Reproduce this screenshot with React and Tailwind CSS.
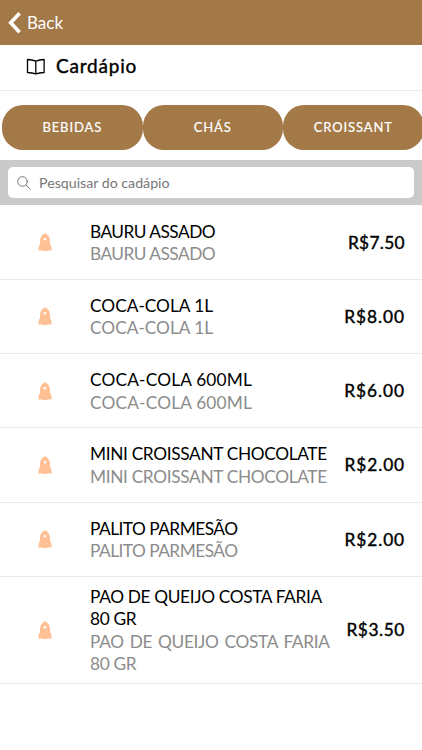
import { useState } from 'react';

const CATEGORIES = ['BEBIDAS', 'CHÁS', 'CROISSANT'];

const PRODUCTS = [
  { name: 'BAURU ASSADO', price: 'R$7.50', tracking: 'tracking-[-0.52px]', priceTracking: 'tracking-[0.35px]' },
  { name: 'COCA-COLA 1L', price: 'R$8.00', tracking: 'tracking-[0px]', priceTracking: 'tracking-[0.95px]' },
  { name: 'COCA-COLA 600ML', price: 'R$6.00', tracking: 'tracking-[0.18px]', priceTracking: 'tracking-[0.95px]' },
  { name: 'MINI CROISSANT CHOCOLATE', price: 'R$2.00', tracking: 'tracking-[-0.34px]', priceTracking: 'tracking-[0.9px]' },
  { name: 'PALITO PARMESÃO', price: 'R$2.00', tracking: 'tracking-[-0.52px]', priceTracking: 'tracking-[0.9px]' },
  { name: 'PAO DE QUEIJO COSTA FARIA 80 GR', price: 'R$3.50', tracking: 'tracking-[-0.35px]', priceTracking: 'tracking-[0.6px]' },
];

function BackIcon() {
  return (
    <svg width="13" height="22" viewBox="0 0 13 22" fill="none" stroke="currentColor" strokeWidth="3.6">
      <path d="M11.6 1.200 2.700 10.700l8.900 9.500" />
    </svg>
  );
}

function BookIcon() {
  return (
    <svg width="20" height="18" viewBox="0 0 20 18" fill="none" stroke="currentColor" strokeWidth="1.3" strokeLinejoin="round">
      <path d="M9.800 3.200C7.400 2.300 4.600 1.700 1.500 1.500v13c3.100.1 5.900.6 8.300 1.400 2.400-.8 5.200-1.300 8.300-1.400v-13C15 1.700 12.200 2.300 9.800 3.200ZM9.800 3.200v12.700" />
    </svg>
  );
}

function SearchIcon() {
  return (
    <svg width="14" height="14" viewBox="0 0 14 14" fill="none" stroke="currentColor" strokeWidth="1" strokeLinecap="round">
      <circle cx="5.500" cy="5.500" r="4.800" />
      <path d="m9 9 4.400 4.300" />
    </svg>
  );
}

function RocketIcon() {
  return (
    <svg width="14" height="19" viewBox="0 0 14 19" fill="#ffc096">
      <path
        fillRule="evenodd"
        d="M7 .3C4 1.700 2 4.300 2 7.500v3.400C1 12.100.5 13.500.5 15v2.700l2.800-.4c.4.500.9.700 1.500.7.400 0 .6-.2 1-.2.500 0 .7.500 1.200.5s.7-.5 1.200-.5c.4 0 .6.200 1 .2.600 0 1.100-.2 1.500-.7l2.800.4V15c0-1.500-.5-2.900-1.500-4.100V7.500C12 4.300 10 1.700 7 .3ZM7 4.900a1.300 1.300 0 1 1 0 2.600 1.300 1.300 0 0 1 0-2.600Z"
      />
    </svg>
  );
}

function ProductRow({ product }) {
  return (
    <li className="flex min-h-[74.300px] items-center border-b border-[#ebebeb] pr-[17px]">
      <div className="flex w-[90px] shrink-0 justify-center pt-px">
        <RocketIcon />
      </div>
      <div className={`w-[239.500px] shrink-0 pt-[9px] pb-[7px] text-[17.300px] leading-[22.500px] ${product.tracking}`}>
        <p className="text-black">{product.name}</p>
        <p className="text-justify text-[#8c8c8c]">{product.name}</p>
      </div>
      <span className={`ml-auto pt-px text-[17.300px] text-black [-webkit-text-stroke:0.4px_black] ${product.priceTracking}`}>
        {product.price}
      </span>
    </li>
  );
}

export default function App() {
  const [query, setQuery] = useState('');
  const products = PRODUCTS.filter((product) => product.name.toLowerCase().includes(query.toLowerCase()));

  return (
    <div className="h-[750px] w-full overflow-hidden bg-white font-[Lato,sans-serif]">
      <header className="flex h-[45px] items-center bg-[#a37948] pl-2 text-white">
        <button type="button" className="flex items-center gap-[6px]">
          <BackIcon />
          <span className="text-[17px]">Back</span>
        </button>
      </header>

      <div className="flex h-[46px] items-center gap-[10px] border-b border-[#ececec] pb-[2px] pl-[26px] text-black">
        <BookIcon />
        <h1 className="text-[19px] tracking-[0.8px] [-webkit-text-stroke:0.4px_black]">Cardápio</h1>
      </div>

      <nav className="flex h-[69.400px] items-center overflow-hidden pt-[4px] pl-[2px]">
        {CATEGORIES.map((category) => (
          <button
            key={category}
            type="button"
            className="h-[45.500px] w-[140.500px] shrink-0 rounded-[21px] bg-[#a37948] text-[13px] tracking-[0.9px] text-white [-webkit-text-stroke:0.2px_white]"
          >
            {category}
          </button>
        ))}
      </nav>

      <div className="h-[45px] bg-[#cacaca] px-2 pt-[7px]">
        <label className="flex h-[31px] items-center gap-2 rounded-[5px] bg-white pl-[9px] text-[#777]">
          <SearchIcon />
          <input
            value={query}
            onChange={(event) => setQuery(event.target.value)}
            placeholder="Pesquisar do cadápio"
            className="flex-1 text-[14.200px] outline-none placeholder:text-[#777]"
          />
        </label>
      </div>

      <ul>
        {products.map((product) => (
          <ProductRow key={product.name} product={product} />
        ))}
      </ul>
    </div>
  );
}
